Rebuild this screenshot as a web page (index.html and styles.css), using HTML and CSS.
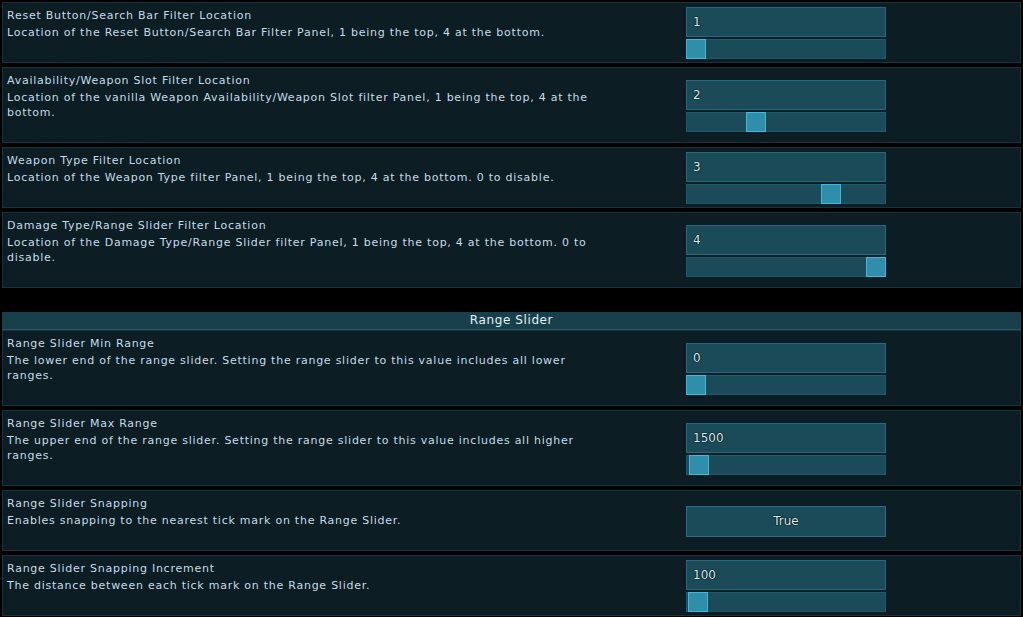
FILE: index.html
```html
<!DOCTYPE html>
<html lang="en">
<head>
    <meta charset="UTF-8">
    <title>Filter Settings</title>
    <link rel="stylesheet" href="styles.css">
</head>
<body>
    <div class="group">
        <div class="row">
            <div class="info">
                <div class="name">Reset Button/Search Bar Filter Location</div>
                <div class="desc">Location of the Reset Button/Search Bar Filter Panel, 1 being the top, 4 at the bottom.</div>
            </div>
            <div class="control">
                <div class="field">1</div>
                <div class="track"><div class="handle" style="left: -1px"></div></div>
            </div>
        </div>
        <div class="row">
            <div class="info">
                <div class="name">Availability/Weapon Slot Filter Location</div>
                <div class="desc">Location of the vanilla Weapon Availability/Weapon Slot filter Panel, 1 being the top, 4 at the bottom.</div>
            </div>
            <div class="control">
                <div class="field">2</div>
                <div class="track"><div class="handle" style="left: 59px"></div></div>
            </div>
        </div>
        <div class="row">
            <div class="info">
                <div class="name">Weapon Type Filter Location</div>
                <div class="desc">Location of the Weapon Type filter Panel, 1 being the top, 4 at the bottom. 0 to disable.</div>
            </div>
            <div class="control">
                <div class="field">3</div>
                <div class="track"><div class="handle" style="left: 134px"></div></div>
            </div>
        </div>
        <div class="row">
            <div class="info">
                <div class="name">Damage Type/Range Slider Filter Location</div>
                <div class="desc">Location of the Damage Type/Range Slider filter Panel, 1 being the top, 4 at the bottom. 0 to disable.</div>
            </div>
            <div class="control">
                <div class="field">4</div>
                <div class="track"><div class="handle" style="left: 179px"></div></div>
            </div>
        </div>
    </div>

    <div class="group">
        <div class="group-title">Range Slider</div>
        <div class="row">
            <div class="info">
                <div class="name">Range Slider Min Range</div>
                <div class="desc">The lower end of the range slider. Setting the range slider to this value includes all lower ranges.</div>
            </div>
            <div class="control">
                <div class="field">0</div>
                <div class="track"><div class="handle" style="left: -1px"></div></div>
            </div>
        </div>
        <div class="row">
            <div class="info">
                <div class="name">Range Slider Max Range</div>
                <div class="desc">The upper end of the range slider. Setting the range slider to this value includes all higher ranges.</div>
            </div>
            <div class="control">
                <div class="field">1500</div>
                <div class="track"><div class="handle" style="left: 2px"></div></div>
            </div>
        </div>
        <div class="row">
            <div class="info">
                <div class="name">Range Slider Snapping</div>
                <div class="desc">Enables snapping to the nearest tick mark on the Range Slider.</div>
            </div>
            <div class="control">
                <button class="toggle">True</button>
            </div>
        </div>
        <div class="row">
            <div class="info">
                <div class="name">Range Slider Snapping Increment</div>
                <div class="desc">The distance between each tick mark on the Range Slider.</div>
            </div>
            <div class="control">
                <div class="field">100</div>
                <div class="track"><div class="handle" style="left: 1px"></div></div>
            </div>
        </div>
    </div>
</body>
</html>
```

FILE: styles.css
```css
body {
    margin: 0;
    padding: 2px;
    background-color: #000;
    color: #c6dce8;
    font-family: "DejaVu Sans", sans-serif;
    font-size: 11px;
    letter-spacing: 0.75px;
}
.group + .group {
    margin-top: 24px;
}
.group-title {
    height: 18px;
    line-height: 17px;
    box-sizing: border-box;
    background-color: #17404b;
    border-bottom: 1px solid #215966;
    color: #e2f1f8;
    font-size: 12px;
    letter-spacing: 0.6px;
    text-align: center;
}
.row {
    display: flex;
    background-color: #0c1d24;
    border: 1px solid #18333d;
}
.row + .row {
    margin-top: 4px;
}
.info {
    flex: 0 0 683px;
    box-sizing: border-box;
    padding: 5px 4px 22px;
    line-height: 15px;
}
.name {
    margin-bottom: 2px;
}
.desc {
    max-width: 600px;
}
.control {
    align-self: center;
    width: 200px;
    display: flex;
    flex-direction: column;
    gap: 2px;
    padding-top: 1px;
}
.field {
    height: 30px;
    box-sizing: border-box;
    padding: 0 6px;
    background-color: #1b4a58;
    border: 1px solid #27687a;
    color: #ddeef7;
    font-size: 12px;
    letter-spacing: 0;
    line-height: 28px;
    text-shadow: 0 0 1px #000, 0 0 1px #000, 0 0 1px #000;
}
.track {
    position: relative;
    height: 20px;
    box-sizing: border-box;
    background-color: #1b4a58;
    border: 1px solid #205a6a;
}
.handle {
    position: absolute;
    top: -1px;
    width: 20px;
    height: 20px;
    box-sizing: border-box;
    background-color: #2f8ea9;
    border: 1px solid #43b7d8;
}
.toggle {
    height: 31px;
    width: 200px;
    background-color: #1b4a58;
    border: 1px solid #2a7084;
    color: #ddeef7;
    font-family: "DejaVu Sans", sans-serif;
    font-size: 12px;
    text-shadow: 0 0 1px #000, 0 0 1px #000, 0 0 1px #000;
}
```
